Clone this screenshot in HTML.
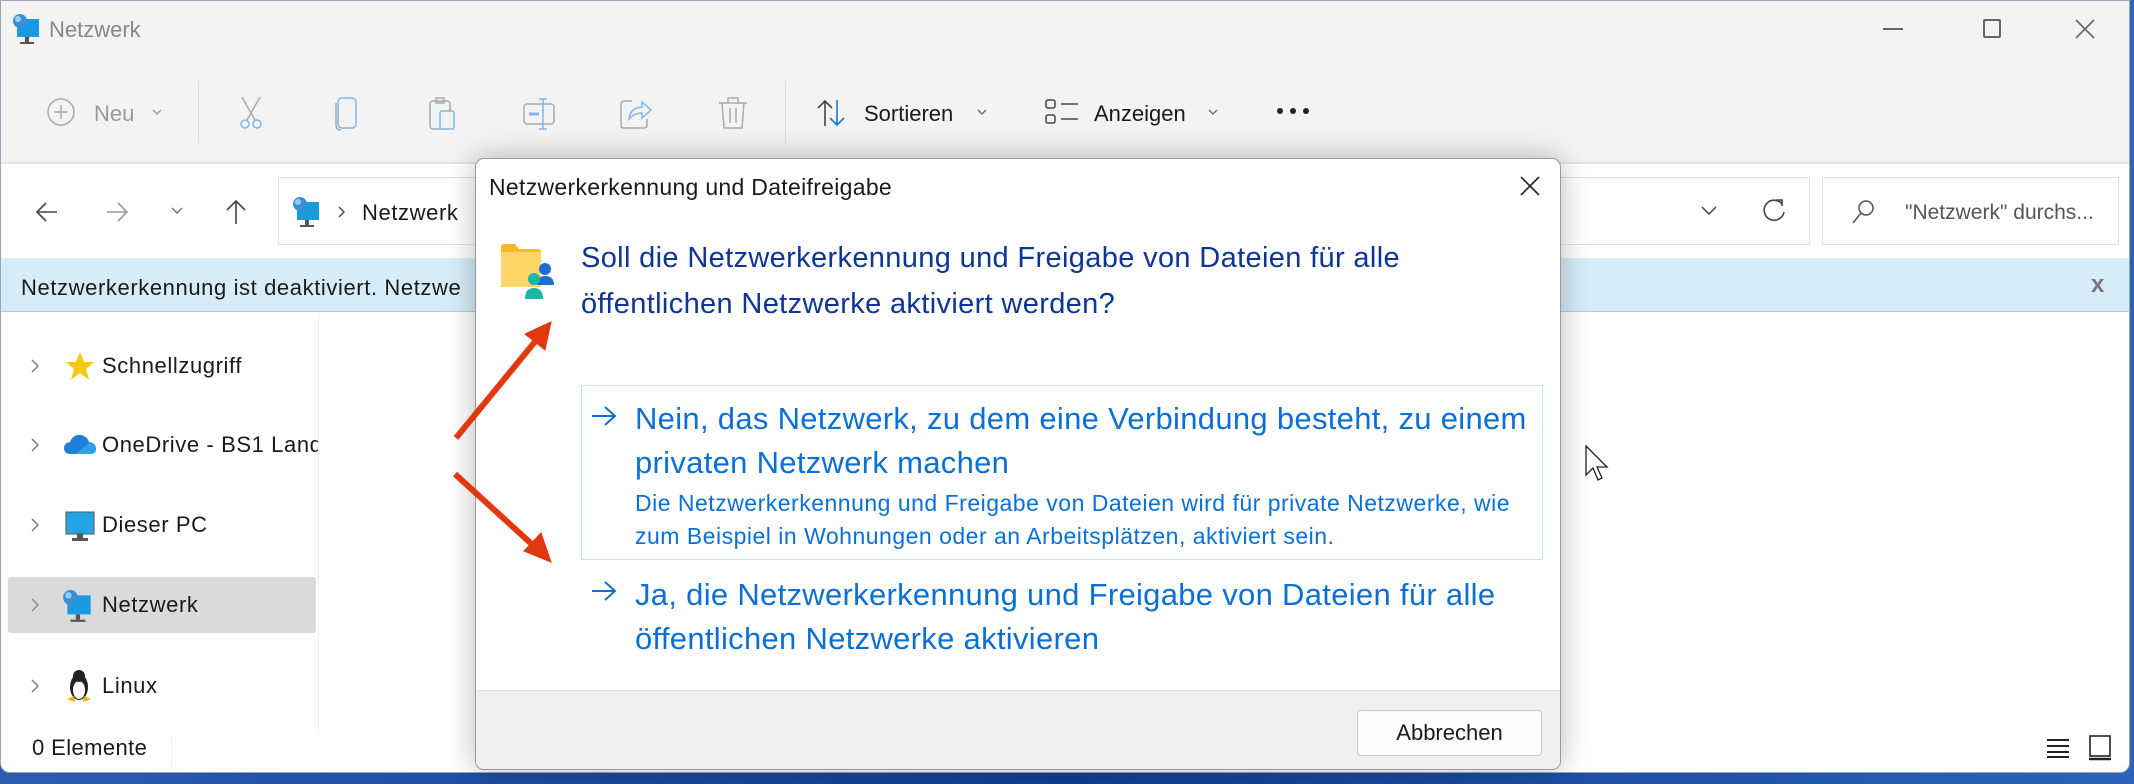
<!DOCTYPE html>
<html><head><meta charset="utf-8"><style>
*{margin:0;padding:0;box-sizing:border-box}
body{width:2134px;height:784px;overflow:hidden;background:linear-gradient(90deg,#2a5db0,#123d94 50%,#2b63b8);font-family:"Liberation Sans",sans-serif;position:relative;color:#1a1a1a}
.a{position:absolute;white-space:nowrap}
#win{position:absolute;left:0;top:0;width:2130px;height:773px;background:#fff;border-radius:0 0 10px 10px;overflow:hidden;border:1px solid #9aa6b4}
.tb{position:absolute;left:0;top:0;width:100%;height:163px;background:#f3f3f3;border-bottom:2px solid #e3e3e3}
.t{font-size:22px}
.s{font-size:22px;letter-spacing:0.6px}
svg{position:absolute;overflow:visible}
#dlg{position:absolute;left:475px;top:158px;width:1086px;height:612px;background:#fff;border:1px solid #9a9a9a;border-radius:9px;box-shadow:0 0 30px rgba(0,0,0,.28);overflow:hidden}
.h{color:#0c3596;font-size:29px;letter-spacing:0.35px}
.o{color:#0a6fd6;font-size:31px;letter-spacing:0.3px}
.d{color:#0a6fd6;font-size:23px;letter-spacing:0.5px}
</style></head><body>
<div id="win">
<div class="tb"></div>
<svg style="left:10px;top:12px" width="34" height="34" viewBox="0 0 34 34"><rect x="6" y="6" width="22" height="18" fill="#1a9be0"/><circle cx="9" cy="8" r="7" fill="#3b8fd6"/><circle cx="7" cy="6" r="3" fill="#8fd0f5"/><rect x="14" y="24" width="4" height="5" fill="#555"/><rect x="9" y="29" width="14" height="2" fill="#555"/></svg>
<div class="a" style="left:48px;top:16px;font-size:22px;color:#888">Netzwerk</div>
<div class="a" style="left:1882px;top:27px;width:20px;height:2px;background:#666"></div>
<div class="a" style="left:1982px;top:18px;width:18px;height:19px;border:2px solid #666;border-radius:2px"></div>
<svg style="left:2074px;top:18px" width="20" height="20"><path d="M1 1L19 19M19 1L1 19" stroke="#666" stroke-width="1.6"/></svg>
<svg style="left:46px;top:97px" width="28" height="28"><circle cx="14" cy="14" r="13" fill="none" stroke="#aaa" stroke-width="1.5"/><path d="M14 7V21M7 14H21" stroke="#aaa" stroke-width="1.5"/></svg>
<div class="a t" style="left:93px;top:100px;color:#999">Neu</div>
<svg style="left:151px;top:108px" width="10" height="7"><path d="M1 1L5 5L9 1" fill="none" stroke="#999" stroke-width="1.3"/></svg>
<div class="a" style="left:197px;top:80px;width:1px;height:62px;background:#ddd"></div>
<svg style="left:236px;top:95px" width="28" height="34"><path d="M5 1L18 24M23 1L10 24" stroke="#aaa" stroke-width="1.5"/><circle cx="8" cy="28" r="4" fill="none" stroke="#7fb6e6" stroke-width="1.5"/><circle cx="20" cy="28" r="4" fill="none" stroke="#7fb6e6" stroke-width="1.5"/></svg>
<svg style="left:334px;top:96px" width="24" height="34"><rect x="3" y="1" width="18" height="30" rx="4" fill="none" stroke="#7fb6e6" stroke-width="1.5"/><path d="M1 6V28Q1 33 6 33" fill="none" stroke="#aaa" stroke-width="1.5"/></svg>
<svg style="left:428px;top:96px" width="28" height="34"><rect x="1" y="4" width="20" height="28" rx="3" fill="none" stroke="#aaa" stroke-width="1.5"/><rect x="7" y="1" width="8" height="5" fill="none" stroke="#aaa" stroke-width="1.5"/><rect x="11" y="14" width="14" height="18" rx="2" fill="#f3f3f3" stroke="#7fb6e6" stroke-width="1.5"/></svg>
<svg style="left:522px;top:97px" width="34" height="32"><rect x="1" y="6" width="30" height="20" rx="3" fill="none" stroke="#aaa" stroke-width="1.5"/><path d="M20 1V31M16 1H24M16 31H24" stroke="#7fb6e6" stroke-width="1.5"/><path d="M6 16H16" stroke="#7fb6e6" stroke-width="3"/></svg>
<svg style="left:619px;top:96px" width="32" height="32"><path d="M12 4H4Q1 4 1 7V28Q1 31 4 31H24Q27 31 27 28V22" fill="none" stroke="#aaa" stroke-width="1.5"/><path d="M9 22Q10 11 22 10V5L31 13L22 21V16Q14 16 9 22Z" fill="none" stroke="#7fb6e6" stroke-width="1.5"/></svg>
<svg style="left:717px;top:95px" width="30" height="34"><path d="M1 7H29M10 7V2H20V7M4 7L6 32H24L26 7M12 12V27M18 12V27" fill="none" stroke="#aaa" stroke-width="1.5"/></svg>
<div class="a" style="left:784px;top:80px;width:1px;height:62px;background:#ddd"></div>
<svg style="left:815px;top:98px" width="30" height="28"><path d="M9 27V2M2 9L9 2L16 9" fill="none" stroke="#444" stroke-width="1.6"/><path d="M21 1V26M14 19L21 26L28 19" fill="none" stroke="#1a73c8" stroke-width="1.6"/></svg>
<div class="a t" style="left:863px;top:100px">Sortieren</div>
<svg style="left:976px;top:108px" width="10" height="7"><path d="M1 1L5 5L9 1" fill="none" stroke="#666" stroke-width="1.3"/></svg>
<svg style="left:1044px;top:98px" width="34" height="26"><rect x="1" y="1" width="9" height="8" rx="2" fill="none" stroke="#444" stroke-width="1.5"/><rect x="1" y="16" width="9" height="8" rx="2" fill="none" stroke="#444" stroke-width="1.5"/><path d="M16 5H33M16 20H33" stroke="#444" stroke-width="1.5"/></svg>
<div class="a t" style="left:1093px;top:100px">Anzeigen</div>
<svg style="left:1207px;top:108px" width="10" height="7"><path d="M1 1L5 5L9 1" fill="none" stroke="#666" stroke-width="1.3"/></svg>
<svg style="left:1275px;top:106px" width="34" height="8"><circle cx="4" cy="4" r="3" fill="#222"/><circle cx="17" cy="4" r="3" fill="#222"/><circle cx="30" cy="4" r="3" fill="#222"/></svg>
<svg style="left:34px;top:200px" width="24" height="22"><path d="M22 11H2M11 2L2 11L11 20" fill="none" stroke="#444" stroke-width="1.6"/></svg>
<svg style="left:104px;top:200px" width="24" height="22"><path d="M2 11H22M13 2L22 11L13 20" fill="none" stroke="#999" stroke-width="1.6"/></svg>
<svg style="left:170px;top:206px" width="12" height="8"><path d="M1 1L6 6L11 1" fill="none" stroke="#666" stroke-width="1.3"/></svg>
<svg style="left:224px;top:198px" width="22" height="26"><path d="M11 25V2M2 11L11 2L20 11" fill="none" stroke="#444" stroke-width="1.6"/></svg>
<div class="a" style="left:277px;top:176px;width:1532px;height:68px;border:1px solid #e0e0e0;background:#fff"></div>
<svg style="left:290px;top:195px" width="34" height="34" viewBox="0 0 34 34"><rect x="6" y="6" width="22" height="18" fill="#1a9be0"/><circle cx="9" cy="8" r="7" fill="#3b8fd6"/><circle cx="7" cy="6" r="3" fill="#8fd0f5"/><rect x="14" y="24" width="4" height="5" fill="#555"/><rect x="9" y="29" width="14" height="2" fill="#555"/></svg>
<svg style="left:337px;top:205px" width="8" height="12"><path d="M1 1L6 6L1 11" fill="none" stroke="#444" stroke-width="1.4"/></svg>
<div class="a s" style="left:361px;top:199px">Netzwerk</div>
<svg style="left:1700px;top:205px" width="16" height="10"><path d="M1 1L8 8L15 1" fill="none" stroke="#444" stroke-width="1.5"/></svg>
<svg style="left:1762px;top:197px" width="24" height="26"><path d="M19 6A10 10 0 1 0 21 14" fill="none" stroke="#444" stroke-width="1.6"/><path d="M13 2H19V8" fill="none" stroke="#444" stroke-width="1.6"/></svg>
<div class="a" style="left:1821px;top:176px;width:297px;height:68px;border:1px solid #e0e0e0;background:#fff"></div>
<svg style="left:1850px;top:198px" width="24" height="26"><circle cx="15" cy="9" r="7" fill="none" stroke="#555" stroke-width="1.5"/><path d="M10 14L2 24" stroke="#555" stroke-width="1.5"/></svg>
<div class="a" style="left:1904px;top:200px;font-size:21px;color:#555">"Netzwerk" durchs...</div>
<div class="a" style="left:0;top:257px;width:100%;height:54px;background:#d7ecf9;border-bottom:1px solid #b9c6d2"></div>
<div class="a s" style="left:20px;top:274px">Netzwerkerkennung ist deaktiviert. Netzwe</div>
<div class="a" style="left:2090px;top:270px;font-size:24px;font-weight:bold;color:#777">x</div>
<div class="a" style="left:317px;top:312px;width:1px;height:420px;background:#f0f0f0"></div>
<div class="a" style="left:7px;top:576px;width:308px;height:56px;background:#dadada;border-radius:3px"></div>
<svg style="left:30px;top:358px" width="8" height="14"><path d="M1 1L7 7L1 13" fill="none" stroke="#777" stroke-width="1.4"/></svg>
<svg style="left:64px;top:350px" width="30" height="30"><path d="M15 1L19 11L29 11L21 18L24 29L15 22L6 29L9 18L1 11L11 11Z" fill="#f9c900"/></svg>
<div class="a s" style="left:101px;top:352px">Schnellzugriff</div>
<svg style="left:30px;top:437px" width="8" height="14"><path d="M1 1L7 7L1 13" fill="none" stroke="#777" stroke-width="1.4"/></svg>
<svg style="left:62px;top:432px" width="34" height="22"><path d="M8 21Q1 21 1 15Q1 10 7 9Q10 1 18 2Q24 3 26 9Q33 10 33 16Q33 21 27 21Z" fill="#1f7fd8"/><path d="M12 21L26 10Q33 11 33 16Q33 21 27 21Z" fill="#2da0ee"/></svg>
<div class="a s" style="left:101px;top:431px;width:216px;overflow:hidden">OneDrive - BS1 Landkreis</div>
<svg style="left:30px;top:517px" width="8" height="14"><path d="M1 1L7 7L1 13" fill="none" stroke="#777" stroke-width="1.4"/></svg>
<svg style="left:64px;top:510px" width="30" height="32"><rect x="1" y="1" width="28" height="22" fill="#22a5e6" stroke="#555" stroke-width="1"/><rect x="12" y="23" width="6" height="4" fill="#555"/><rect x="7" y="27" width="16" height="3" fill="#555"/></svg>
<div class="a s" style="left:101px;top:511px">Dieser PC</div>
<svg style="left:30px;top:597px" width="8" height="14"><path d="M1 1L7 7L1 13" fill="none" stroke="#888" stroke-width="1.4"/></svg>
<svg style="left:60px;top:588px" width="36" height="36" viewBox="0 0 34 34"><rect x="6" y="6" width="22" height="18" fill="#1a9be0"/><circle cx="9" cy="8" r="7" fill="#3b8fd6"/><circle cx="7" cy="6" r="3" fill="#8fd0f5"/><rect x="14" y="24" width="4" height="5" fill="#555"/><rect x="9" y="29" width="14" height="2" fill="#555"/></svg>
<div class="a s" style="left:101px;top:591px">Netzwerk</div>
<svg style="left:30px;top:678px" width="8" height="14"><path d="M1 1L7 7L1 13" fill="none" stroke="#777" stroke-width="1.4"/></svg>
<svg style="left:64px;top:668px" width="28" height="34"><ellipse cx="14" cy="18" rx="9" ry="13" fill="#222"/><ellipse cx="14" cy="21" rx="6" ry="9" fill="#fff"/><circle cx="14" cy="7" r="6" fill="#222"/><path d="M2 30L9 27L10 33Z M26 30L19 27L18 33Z" fill="#f0b400"/></svg>
<div class="a s" style="left:101px;top:672px">Linux</div>
<div class="a" style="left:31px;top:734px;font-size:22px;letter-spacing:0.4px">0 Elemente</div>
<div class="a" style="left:170px;top:736px;width:1px;height:30px;background:#eee"></div>
<svg style="left:2045px;top:737px" width="24" height="20"><path d="M1 2H23M1 8H23M1 14H23M1 19H23" stroke="#222" stroke-width="2"/></svg>
<svg style="left:2088px;top:734px" width="22" height="26"><rect x="1" y="1" width="20" height="20" fill="none" stroke="#222" stroke-width="1.6"/><path d="M0 24H22" stroke="#222" stroke-width="2.5"/></svg>
<svg style="left:1584px;top:444px" width="26" height="40"><path d="M1 1V30L8 23L13 35L17 33L12 22H22Z" fill="#fff" stroke="#222" stroke-width="1.3"/></svg>
</div>
<div id="dlg">
<div class="a" style="left:13px;top:15px;font-size:23px;letter-spacing:0.3px">Netzwerkerkennung und Dateifreigabe</div>
<svg style="left:1044px;top:17px" width="20" height="20"><path d="M1 1L19 19M19 1L1 19" stroke="#222" stroke-width="1.6"/></svg>
<svg style="left:24px;top:84px" width="60" height="58"><path d="M1 4Q1 1 4 1H15L19 6H38Q41 6 41 9V44H1Z" fill="#f5b92a"/><rect x="1" y="9" width="40" height="35" rx="2" fill="#fcd668"/><circle cx="45" cy="26" r="6" fill="#1a6fd0"/><path d="M37 42Q37 33 45 33Q54 33 54 42Z" fill="#1a6fd0"/><circle cx="34" cy="36" r="6" fill="#19b7a5"/><path d="M25 56Q25 45 34 45Q43 45 43 56Z" fill="#19b7a5"/></svg>
<div class="a h" style="left:105px;top:83px">Soll die Netzwerkerkennung und Freigabe von Dateien für alle</div>
<div class="a h" style="left:105px;top:129px">öffentlichen Netzwerke aktiviert werden?</div>
<div class="a" style="left:105px;top:226px;width:962px;height:175px;border:1px solid #c6e0f5"></div>
<svg style="left:115px;top:246px" width="26" height="22"><path d="M1 11H24M14 2L24 11L14 20" fill="none" stroke="#0a6fd6" stroke-width="2"/></svg>
<div class="a o" style="left:159px;top:242px">Nein, das Netzwerk, zu dem eine Verbindung besteht, zu einem</div>
<div class="a o" style="left:159px;top:286px">privaten Netzwerk machen</div>
<div class="a d" style="left:159px;top:331px">Die Netzwerkerkennung und Freigabe von Dateien wird für private Netzwerke, wie</div>
<div class="a d" style="left:159px;top:364px">zum Beispiel in Wohnungen oder an Arbeitsplätzen, aktiviert sein.</div>
<svg style="left:115px;top:421px" width="26" height="22"><path d="M1 11H24M14 2L24 11L14 20" fill="none" stroke="#0a6fd6" stroke-width="2"/></svg>
<div class="a o" style="left:159px;top:418px">Ja, die Netzwerkerkennung und Freigabe von Dateien für alle</div>
<div class="a o" style="left:159px;top:462px">öffentlichen Netzwerke aktivieren</div>
<div class="a" style="left:0;top:531px;width:100%;height:82px;background:#f0f0f0;border-top:1px solid #dedede"></div>
<div class="a" style="left:881px;top:551px;width:185px;height:46px;background:#fbfbfb;border:1px solid #ccc;border-radius:4px;font-size:22px;text-align:center;line-height:44px">Abbrechen</div>
</div>
<svg style="left:0;top:0" width="2134" height="784"><g fill="#e2370f" stroke="#e2370f"><path d="M456 438L538 338" stroke-width="6"/><path d="M551 322L525 334L545 350Z"/><path d="M455 474L536 548" stroke-width="6"/><path d="M551 562L524 551L541 533Z"/></g></svg>
</body></html>
